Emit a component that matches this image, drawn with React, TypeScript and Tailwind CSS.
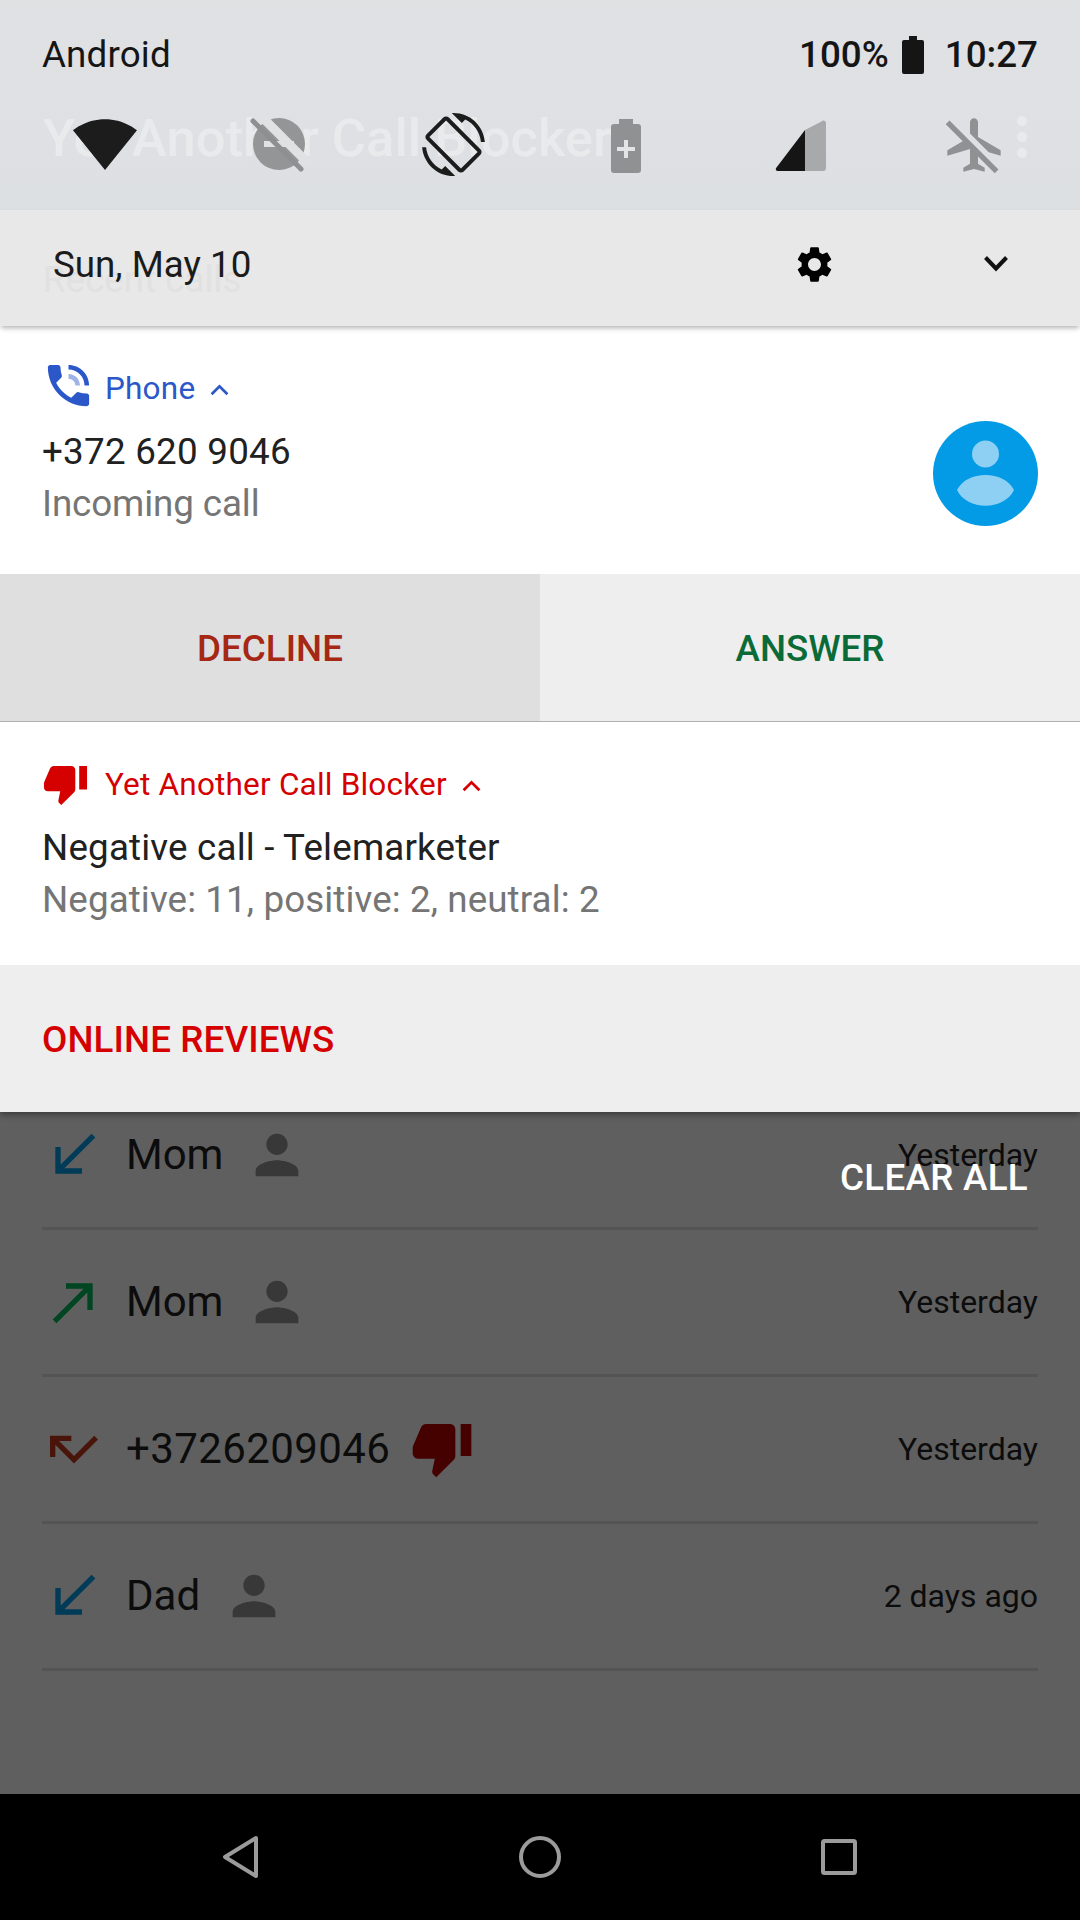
import React from "react";

const THUMB = "M15 3H6c-.83 0-1.54.5-1.84 1.22l-3.02 7.05c-.09.23-.14.47-.14.73v2c0 1.1.9 2 2 2h6.31l-.95 4.57-.03.32c0 .41.17.79.44 1.06L9.83 23l6.59-6.59c.36-.36.58-.86.58-1.41V5c0-1.1-.9-2-2-2zm4 0v12h4V3h-4z";
const PERSON = "M12 12c2.21 0 4-1.79 4-4s-1.79-4-4-4-4 1.79-4 4 1.79 4 4 4zm0 2c-2.67 0-8 1.34-8 4v2h16v-2c0-2.66-5.33-4-8-4z";
const RECEIVED = "M20 5.41L18.59 4 7 15.59V9H5v10h10v-2H8.41z";
const MADE = "M9 5v2h6.59L4 18.59 5.41 20 17 8.41V15h2V5z";
const MISSED = "M19.59 7L12 14.59 6.41 9H11V7H3v8h2v-4.59l7 7 9-9z";

function Chevron({ className }: { className: string }) {
  return (
    <svg viewBox="0 0 18 12" className={className} fill="none" stroke="currentColor" strokeWidth="2.6">
      <path d="M1.5 10.5L9 3l7.5 7.5" />
    </svg>
  );
}

function Row({ arrow, arrowColor, name, trailing, time }: { arrow: string; arrowColor: string; name: string; trailing: "person" | "thumb"; time: string }) {
  return (
    <div className="h-[147px] border-b-[3px] border-[#545454] flex items-center shrink-0">
      <svg viewBox="0 0 24 24" className={`w-[64px] h-[64px] shrink-0 ${arrowColor}`} fill="currentColor"><path d={arrow} /></svg>
      <span className={trailing === "thumb" ? "ml-[20px] text-[42px] leading-[50px] text-[#0c0c0c] tracking-[0.4px]" : "ml-[20px] text-[42px] leading-[50px] text-[#0c0c0c]"}>{name}</span>
      {trailing === "person" ? (
        <svg viewBox="0 0 24 24" className="ml-[22px] w-[64px] h-[64px] text-[#383838]" fill="currentColor"><path d={PERSON} /></svg>
      ) : (
        <svg viewBox="0 0 24 24" className="ml-[20px] -mt-[3px] w-[64px] h-[64px] text-[#450000]" fill="currentColor"><path d={THUMB} /></svg>
      )}
      <span className="ml-auto text-[32px] leading-[40px] text-[#0c0c0c]">{time}</span>
    </div>
  );
}

export default function App() {
  return (
    <div className="relative w-[1080px] h-[1920px] overflow-hidden flex flex-col bg-[#5f5f5f] font-['Roboto',sans-serif]">
      <div className="relative z-10 shrink-0 shadow-[0_2px_7px_rgba(0,0,0,0.45)]">
        {/* Header */}
        <div className="relative h-[210px] bg-linear-to-b from-[#e0e1e3] to-[#dde0e3]">
          <div className="absolute left-[43px] top-[108px] text-[52.5px] leading-[60px] font-medium text-[#e9eaeb] whitespace-nowrap">Yet Another Call Blocker</div>
          <div className="h-[108px] pt-[2px] px-[42px] flex items-center text-[36.75px] text-[#151515]">
            <span className="tracking-[0.15px]">Android</span>
            <span className="ml-auto font-medium">100%</span>
            <svg viewBox="0 0 22 38" className="ml-[13px] w-[22px] h-[38px] text-[#151515]" fill="currentColor">
              <path d="M7 0h8v4h5a2 2 0 0 1 2 2v30a2 2 0 0 1-2 2H2a2 2 0 0 1-2-2V6a2 2 0 0 1 2-2h5z" />
            </svg>
            <span className="ml-[21px] font-medium">10:27</span>
          </div>
          <div className="relative pl-[18px] w-[1062px] grid grid-cols-6 h-[72px] items-center justify-items-center">
            <svg viewBox="0 0 24 24" className="w-[66px] h-[66px] text-[#1c1c1c]" fill="currentColor">
              <path d="M12.01 21.49L23.64 7c-.45-.34-4.93-4-11.64-4C5.28 3 .81 6.66.36 7l11.64 14.49.01.01z" />
            </svg>
            <svg viewBox="0 0 66 66" className="w-[66px] h-[66px]">
              <circle cx="33" cy="33" r="26" fill="#939596" />
              <rect x="18" y="30" width="30" height="6" fill="#dfe1e3" />
              <path d="M11 6l50 50" stroke="#dfe1e3" strokeWidth="9" transform="translate(2.5 -2.5)" />
              <path d="M7 10l48 48" stroke="#8d8f91" strokeWidth="5" strokeLinecap="round" />
            </svg>
            <svg viewBox="0 0 24 24" className="w-[63px] h-[63px] text-[#1c1c1c]" fill="currentColor">
              <path d="M16.48 2.52c3.27 1.55 5.61 4.72 5.97 8.48h1.5C23.44 4.84 18.29 0 12 0l-.66.03 3.81 3.81 1.33-1.32zm-6.25-.77c-.59-.59-1.54-.59-2.12 0L1.75 8.11c-.59.59-.59 1.54 0 2.12l12.02 12.02c.59.59 1.54.59 2.12 0l6.36-6.36c.59-.59.59-1.54 0-2.12L10.23 1.75zm4.6 19.44L2.81 9.17l6.36-6.36 12.02 12.02-6.36 6.36zm-7.31.29C4.25 19.94 1.91 16.76 1.55 13H.05C.56 19.16 5.71 24 12 24l.66-.03-3.81-3.81-1.33 1.32z" />
            </svg>
            <svg viewBox="0 0 30 54" className="mt-[3px] -ml-[2px] w-[30px] h-[54px]">
              <path d="M8 0h14v5h5a3 3 0 0 1 3 3v43a3 3 0 0 1-3 3H3a3 3 0 0 1-3-3V8a3 3 0 0 1 3-3h5z" fill="#8f9193" />
              <path d="M13 21h4v7h7v4h-7v7h-4v-7H6v-4h7z" fill="#e3e4e6" />
            </svg>
            <svg viewBox="0 0 52 52" className="mt-[3px] w-[52px] h-[52px]">
              <path d="M30 10L30 51H3C1 51 0 49 1.500 47.500z" fill="#151515" />
              <path d="M30 10L46.500 1.500C48.500 -.5 51 1 51 3V48C51 50 50 51 48 51H30z" fill="#a8a9aa" />
            </svg>
            <svg viewBox="0 0 24 24" className="mt-[2px] -ml-[3px] w-[64px] h-[64px] text-[#8f9193]" fill="currentColor">
              <path d="M10.5 7.67V3.5c0-.83.67-1.5 1.5-1.5s1.5.67 1.5 1.5V9l8.5 5v2l-4.49-1.32-7.01-7.01zm9.28 14.94l1.41-1.41-7.69-7.7-3.94-3.94-6.75-6.75-1.42 1.41 6.38 6.38L2 14v2l8.5-2.5V19L8 20.5V22l4-1 4 1v-1.500L13.5 19v-2.670l6.280 6.280z" />
            </svg>
          </div>
          <div className="absolute left-[1017px] top-[116px] flex flex-col gap-[6px]">
            <div className="w-[10px] h-[10px] rounded-full bg-[#e9eaeb]" />
            <div className="w-[10px] h-[10px] rounded-full bg-[#e9eaeb]" />
            <div className="w-[10px] h-[10px] rounded-full bg-[#e9eaeb]" />
          </div>
        </div>

        {/* Date row */}
        <div className="relative h-[116px] bg-[#e8e8e8] shadow-[0_3px_5px_-1px_rgba(0,0,0,0.3)] pb-[8px] pl-[53px] pr-[60px] flex items-center">
          <div className="absolute left-[43px] top-[48px] text-[36.75px] leading-[44px] text-[#e1e1e1]">Recent calls</div>
          <span className="relative mt-[2px] text-[36.75px] text-[#1b1b1b]">Sun, May 10</span>
          <svg viewBox="0 0 24 24" className="relative ml-auto w-[43px] h-[43px] text-black" fill="currentColor">
            <path d="M19.14 12.94c.04-.3.06-.61.06-.94 0-.32-.02-.64-.07-.94l2.03-1.58c.18-.14.23-.41.12-.61l-1.92-3.32c-.12-.22-.37-.29-.59-.22l-2.39.96c-.5-.38-1.03-.7-1.62-.94l-.36-2.54c-.04-.24-.24-.41-.48-.41h-3.84c-.24 0-.43.17-.47.41l-.36 2.54c-.59.24-1.13.57-1.62.94l-2.39-.96c-.22-.08-.47 0-.59.22L2.740 8.870c-.12.21-.08.47.12.61l2.03 1.58c-.05.3-.09.63-.09.94s.02.64.07.94l-2.03 1.58c-.18.14-.23.41-.12.61l1.92 3.32c.12.22.37.29.59.22l2.39-.96c.5.38 1.03.7 1.62.94l.36 2.54c.05.24.24.41.48.41h3.84c.24 0 .44-.17.47-.41l.36-2.54c.59-.24 1.13-.56 1.62-.94l2.39.96c.22.08.47 0 .59-.22l1.92-3.32c.12-.22.07-.47-.12-.61l-2.010-1.580zM12 15.600c-1.980 0-3.600-1.620-3.600-3.600s1.620-3.600 3.600-3.600 3.600 1.620 3.600 3.600-1.620 3.600-3.600 3.600z" />
          </svg>
          <svg viewBox="0 0 48 48" className="ml-[136px] w-[48px] h-[48px] text-[#111111]" fill="none" stroke="currentColor" strokeWidth="4">
            <path d="M13.500 17.500L24 28.500l10.500-11" />
          </svg>
        </div>

        {/* Phone notification */}
        <div className="h-[248px] bg-white pl-[42px] pr-[42px] flex items-start">
          <div className="flex-1">
            <div className="mt-[38px] h-[50px] flex items-center text-[#2b57c9] text-[31.5px]">
              <svg viewBox="0 0 24 24" className="-ml-[1px] -mt-[8px] w-[55px] h-[55px] shrink-0" fill="currentColor">
                <path d="M20 15.500c-1.250 0-2.450-.2-3.570-.57-.35-.11-.74-.03-1.020.24l-2.200 2.200c-2.830-1.440-5.150-3.750-6.590-6.590l2.200-2.210c.28-.26.36-.65.25-1C8.700 6.450 8.500 5.250 8.500 4c0-.55-.45-1-1-1H4c-.55 0-1 .45-1 1 0 9.390 7.610 17 17 17 .55 0 1-.45 1-1v-3.500c0-.55-.45-1-1-1z" />
                <path d="M19 12h2c0-4.970-4.030-9-9-9v2c3.870 0 7 3.130 7 7z" />
                <path d="M15 12h2c0-2.760-2.240-5-5-5v2c1.660 0 3 1.340 3 3z" opacity="0.45" />
              </svg>
              <span className="ml-[9px] tracking-[0.2px]">Phone</span>
              <Chevron className="ml-[15px] w-[19px] h-[13px]" />
            </div>
            <div className="mt-[12px] text-[36.75px] leading-[52px] text-[#212121] tracking-[0.25px]">+372 620 9046</div>
            <div className="text-[36.75px] leading-[52px] text-[#757575] -tracking-[0.1px]">Incoming call</div>
          </div>
          <svg viewBox="0 0 105 105" className="mt-[95px] w-[105px] h-[105px] shrink-0">
            <circle cx="52.500" cy="52.500" r="52.500" fill="#039be5" />
            <circle cx="52.500" cy="33" r="13.500" fill="#8ed0f4" />
            <path d="M24 69C34 49 71 49 81 69C71 90 34 90 24 69z" fill="#8ed0f4" />
          </svg>
        </div>

        {/* Call actions */}
        <div className="h-[148px] flex border-b border-[#b0b0b0] text-[36.75px] font-medium">
          <div className="w-1/2 pt-[2px] bg-[#dfdfdf] flex items-center justify-center text-[#a52714]">DECLINE</div>
          <div className="w-1/2 pt-[2px] bg-[#eeeeee] flex items-center justify-center text-[#0b6b38]">ANSWER</div>
        </div>

        {/* Blocker notification */}
        <div className="h-[243px] bg-white px-[42px]">
          <div className="pt-[38px] h-[88px] flex items-center text-[#d50000] text-[31.5px]">
            <svg viewBox="0 0 24 24" className="-mt-[3px] w-[47px] h-[47px] shrink-0" fill="currentColor"><path d={THUMB} /></svg>
            <span className="ml-[16px] tracking-[0.2px]">Yet Another Call Blocker</span>
            <Chevron className="ml-[15px] w-[19px] h-[13px]" />
          </div>
          <div className="mt-[12px] text-[36.75px] leading-[52px] text-[#212121] tracking-[0.18px]">Negative call - Telemarketer</div>
          <div className="text-[36.75px] leading-[52px] text-[#757575] tracking-[0.1px]">Negative: 11, positive: 2, neutral: 2</div>
        </div>

        {/* Notification action */}
        <div className="h-[147px] pt-[2px] bg-[#eeeeee] px-[42px] flex items-center text-[36.75px] font-medium text-[#d50000] tracking-[0.1px]">ONLINE REVIEWS</div>
      </div>

      {/* Call list under the shade */}
      <div className="flex-1 -mt-[29px] px-[42px] flex flex-col">
        <Row arrow={RECEIVED} arrowColor="text-[#003b58]" name="Mom" trailing="person" time="Yesterday" />
        <Row arrow={MADE} arrowColor="text-[#004622]" name="Mom" trailing="person" time="Yesterday" />
        <Row arrow={MISSED} arrowColor="text-[#491409]" name="+3726209046" trailing="thumb" time="Yesterday" />
        <Row arrow={RECEIVED} arrowColor="text-[#003b58]" name="Dad" trailing="person" time="2 days ago" />
      </div>

      <div className="absolute z-20 right-[52px] top-[1156px] text-[36.75px] leading-[44px] font-medium text-white tracking-[0.3px]">CLEAR ALL</div>

      {/* Nav bar */}
      <div className="h-[126px] bg-black shrink-0 relative z-10 grid grid-cols-3 items-center justify-items-center w-[1080px] px-[92px]">
        <svg viewBox="0 0 40 44" className="w-[40px] h-[44px]" fill="none" stroke="#9b9b9b" strokeWidth="4" strokeLinejoin="round">
          <path d="M35 3L4 22l31 19z" />
        </svg>
        <svg viewBox="0 0 44 44" className="w-[44px] h-[44px]" fill="none" stroke="#9b9b9b" strokeWidth="4">
          <circle cx="22" cy="22" r="19" />
        </svg>
        <svg viewBox="0 0 36 36" className="w-[36px] h-[36px]" fill="none" stroke="#9b9b9b" strokeWidth="4">
          <rect x="2" y="2" width="32" height="32" rx="1.500" />
        </svg>
      </div>
    </div>
  );
}
